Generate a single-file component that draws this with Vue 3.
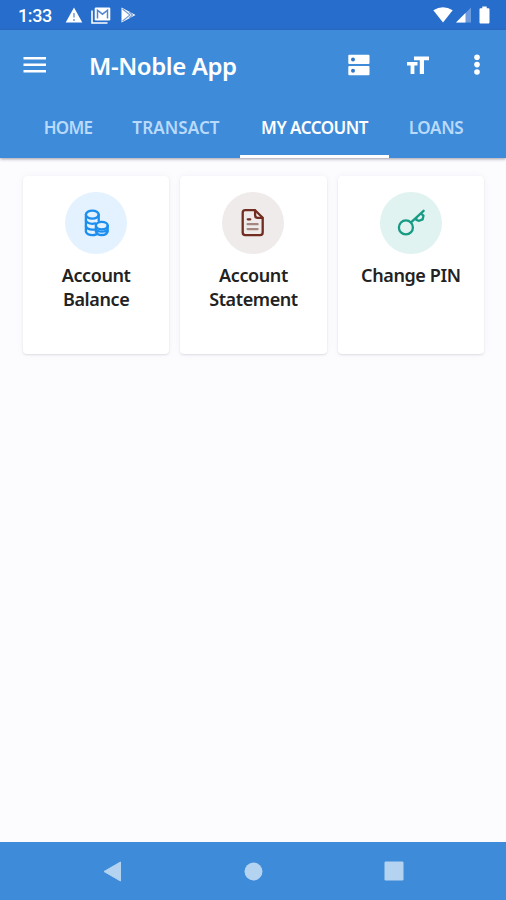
<script setup>
import { ref } from 'vue'

const tabs = [
  { id: 'home', label: 'HOME' },
  { id: 'transact', label: 'TRANSACT' },
  { id: 'account', label: 'MY ACCOUNT' },
  { id: 'loans', label: 'LOANS' }
]

const activeTab = ref('account')

const cards = [
  { id: 'balance', label: 'Account Balance' },
  { id: 'statement', label: 'Account Statement' },
  { id: 'pin', label: 'Change PIN' }
]
</script>

<template>
  <div class="screen">
    <div class="status-bar">
      <span class="time">1:33</span>
      <svg class="warning" width="18" height="16" viewBox="0 0 18 16">
        <path d="M9 0.5L17.3 15.5H0.7z" fill="#fff" />
        <path d="M9 6v4.5M9 12v2" stroke="#7ba3df" stroke-width="1.6" />
      </svg>
      <svg class="mail" width="20" height="17" viewBox="0 0 20 17">
        <path d="M1 3.5V16h15.5" fill="none" stroke="#fff" stroke-width="1.6" />
        <rect x="3.7" y="0.5" width="15.6" height="13" rx="1.2" fill="#fff" />
        <path d="M6.5 11.5V3.2l5 4 5-4v8.3" fill="none" stroke="#5585d0" stroke-width="1.5" />
      </svg>
      <svg class="play" width="15" height="16" viewBox="0 0 15 16">
        <path d="M0.5 0.5L14.5 8 0.5 15.5z" fill="#fff" />
        <path d="M1.5 2l7.5 6-7.5 6M8 4.5l3.5 3.5L8 11.5" fill="none" stroke="#6f9bdc" stroke-width="1.1" />
      </svg>
      <div class="status-right">
        <svg width="20" height="16" viewBox="0 0 20 16">
          <path d="M0.3 3.2Q10-2.6 19.7 3.2L10 15.5z" fill="#fff" />
        </svg>
        <svg class="signal" width="15" height="16" viewBox="0 0 15 16">
          <path d="M15 0.5V15.5H0z" fill="#6d9be0" />
          <path d="M9.5 6V15.5H0z" fill="#fff" />
        </svg>
        <svg class="battery" width="11" height="18" viewBox="0 0 11 18">
          <path d="M3.3 0.5h4.4v1.7h1.8q1 0 1 1v13.3q0 1-1 1h-8q-1 0-1-1V3.2q0-1 1-1h1.8z" fill="#fff" />
        </svg>
      </div>
    </div>

    <header class="app-header">
      <div class="toolbar">
        <button class="icon-btn menu" aria-label="Menu">
          <svg width="24" height="18" viewBox="0 0 24 18">
            <path d="M0.5 2.3h22.5M0.5 8.8h22.5M0.5 15.3h22.5" stroke="#fff" stroke-width="2.6" />
          </svg>
        </button>
        <h1 class="title">M-Noble App</h1>
        <button class="icon-btn dns" aria-label="Server">
          <svg width="22" height="22" viewBox="0 0 22 22">
            <rect x="0.3" y="0.7" width="21.2" height="9.3" rx="1" fill="#fff" />
            <rect x="0.3" y="12" width="21.2" height="9.3" rx="1" fill="#fff" />
            <circle cx="5" cy="5.4" r="2" fill="#2e78ca" />
            <circle cx="5" cy="16.7" r="2" fill="#2e78ca" />
          </svg>
        </button>
        <button class="icon-btn size" aria-label="Text size">
          <svg width="22" height="19" viewBox="0 0 22 19">
            <path d="M7 0.5h15v3.7h-5V18h-4.2V4.2H7z" fill="#fff" />
            <path d="M0 6h10.5v3.4H7.4V18H3.6V9.4H0z" fill="#fff" />
          </svg>
        </button>
        <button class="icon-btn more" aria-label="More">
          <svg width="6" height="22" viewBox="0 0 6 22">
            <circle cx="3" cy="3.2" r="2.8" fill="#fff" />
            <circle cx="3" cy="10.6" r="2.8" fill="#fff" />
            <circle cx="3" cy="18" r="2.8" fill="#fff" />
          </svg>
        </button>
      </div>

      <nav class="tabs">
        <button
          v-for="tab in tabs"
          :key="tab.id"
          class="tab"
          :class="[tab.id, { active: activeTab === tab.id }]"
          @click="activeTab = tab.id"
        >
          {{ tab.label }}
        </button>
      </nav>
    </header>

    <main class="content">
      <div v-for="card in cards" :key="card.id" class="card" :class="card.id">
        <div class="badge">
          <svg v-if="card.id === 'balance'" class="icon" viewBox="0 0 28 28">
            <ellipse cx="10.3" cy="5.6" rx="6.4" ry="4" />
            <path d="M3.9 5.6v17.2q1.4 3.4 6.4 3.4 2 0 4-.8M16.7 5.6v6.2" />
            <path d="M3.9 11.4q1.4 3.4 6.4 3.4 1.6 0 3-.4M3.9 17.2q1.4 3.4 6.4 3.4h3" />
            <ellipse cx="19.8" cy="16.6" rx="5.9" ry="3.7" />
            <path d="M13.9 16.6v6q1.2 3.4 5.9 3.4t5.9-3.4v-6M13.9 20.2q1.2 2.4 5.9 2.4t5.9-2.4" />
          </svg>
          <svg v-else-if="card.id === 'statement'" class="icon" viewBox="0 0 28 28">
            <path d="M6.3 1.2h9.8l7.6 7.6v14.8q0 2.6-2.6 2.6H6.3q-2.6 0-2.6-2.6V3.8q0-2.6 2.6-2.6z" />
            <path d="M16.1 1.5v4.7q0 2.6 2.6 2.6h4.7" />
            <path d="M8.8 10.3h2.4" />
            <path class="faint" d="M8.6 15.2h10M8.6 20.1h10" />
          </svg>
          <svg v-else class="icon" viewBox="0 0 28 28">
            <circle cx="8.9" cy="18.4" r="7" />
            <path d="M14 13.4L26.6 1.8M19.4 8.4v2.6l2.8.8 3.4-1.4.9-3.8-2.6-2" />
          </svg>
        </div>
        <div class="label">{{ card.label }}</div>
      </div>
    </main>

    <footer class="nav-bar">
      <svg width="19" height="21" viewBox="0 0 19 21">
        <path d="M17.5 1v19L1 10.5z" fill="#b3d3f1" stroke="#b3d3f1" stroke-linejoin="round" />
      </svg>
      <svg width="19" height="19" viewBox="0 0 19 19">
        <circle cx="9.5" cy="9.5" r="9" fill="#b3d3f1" />
      </svg>
      <svg width="20" height="20" viewBox="0 0 20 20">
        <rect x="0.5" y="0.5" width="19" height="19" rx="1.2" fill="#b3d3f1" />
      </svg>
    </footer>
  </div>
</template>

<style>
body {
  margin: 0;
}
</style>

<style scoped>
.screen {
  display: flex;
  flex-direction: column;
  width: 506px;
  height: 900px;
  overflow: hidden;
  background: #fcfcff;
  font-family: "Noto Sans", "Open Sans", sans-serif;
}

svg {
  display: block;
  flex: none;
}

button {
  padding: 0;
  border: none;
  background: none;
  font-family: inherit;
  cursor: pointer;
}

.status-bar {
  display: flex;
  align-items: center;
  flex: none;
  height: 30px;
  padding: 0 16px 0 18px;
  box-sizing: border-box;
  background: #276dcb;
}

.time {
  width: 47px;
  font-family: Roboto, sans-serif;
  font-size: 18px;
  font-weight: 500;
  line-height: 30px;
  letter-spacing: -0.4px;
  padding-top: 2px;
  color: #fff;
}

.mail {
  margin-left: 8px;
}

.play {
  margin-left: 10px;
}

.status-right {
  display: flex;
  align-items: center;
  margin-left: auto;
}

.signal {
  margin-left: 3px;
}

.battery {
  margin-left: 8px;
}

.app-header {
  flex: none;
  height: 128px;
  background: #3e8bd9;
  box-shadow: 0 1px 3px rgba(70, 60, 80, 0.5);
}

.toolbar {
  display: flex;
  align-items: center;
  height: 70px;
  padding: 0 26px 0 23px;
}

.title {
  width: 259px;
  margin: 2px 0 0 42px;
  font-size: 24px;
  font-weight: 650;
  line-height: 32px;
  letter-spacing: -0.4px;
  white-space: nowrap;
  color: #fff;
}

.size {
  margin-left: 37px;
}

.more {
  margin-left: 45px;
}

.tabs {
  display: flex;
  height: 58px;
  padding-left: 24px;
}

.tab {
  box-sizing: border-box;
  border-bottom: 3px solid transparent;
  font-size: 17px;
  font-weight: 600;
  letter-spacing: -0.3px;
  white-space: nowrap;
  color: #b9dafa;
}

.tab.home {
  width: 88px;
  letter-spacing: -0.7px;
}

.tab.transact {
  width: 128px;
  letter-spacing: 0.1px;
}

.tab.account {
  width: 149px;
}

.tab.loans {
  width: 94px;
}

.tab.active {
  border-bottom-color: #fff;
  font-weight: 650;
  letter-spacing: -0.5px;
  color: #fff;
}

.content {
  display: grid;
  grid-template-columns: repeat(3, 1fr);
  grid-auto-rows: 178px;
  gap: 11px;
  flex: 1;
  padding: 18px 22px 0 23px;
}

.card {
  display: flex;
  flex-direction: column;
  align-items: center;
  padding-top: 16px;
  box-sizing: border-box;
  border-radius: 4px;
  background: #fff;
  box-shadow: 0 1px 2px rgba(60, 60, 80, 0.14), 0 0 8px rgba(60, 60, 90, 0.04);
}

.badge {
  display: flex;
  align-items: center;
  justify-content: center;
  width: 62px;
  height: 62px;
  border-radius: 50%;
}

.icon {
  width: 28px;
  height: 28px;
  fill: none;
  stroke-width: 2.3;
  stroke-linecap: round;
  stroke-linejoin: round;
}

.balance .badge {
  background: #e3f2fe;
}

.balance .icon {
  stroke: #1c8eee;
}

.statement .badge {
  background: #efebea;
}

.statement .icon {
  stroke: #712d20;
}

.statement .icon .faint {
  stroke: #a48780;
}

.pin .badge {
  background: #e0f3f0;
}

.pin .icon {
  stroke: #179b84;
}

.label {
  width: 110px;
  margin-top: 9px;
  font-size: 18px;
  font-weight: 600;
  line-height: 24px;
  letter-spacing: -0.4px;
  text-align: center;
  color: #222;
}

.nav-bar {
  display: flex;
  align-items: center;
  justify-content: space-between;
  flex: none;
  height: 58px;
  padding: 0 102px 0 103px;
  box-sizing: border-box;
  background: #3e8bd9;
}
</style>
